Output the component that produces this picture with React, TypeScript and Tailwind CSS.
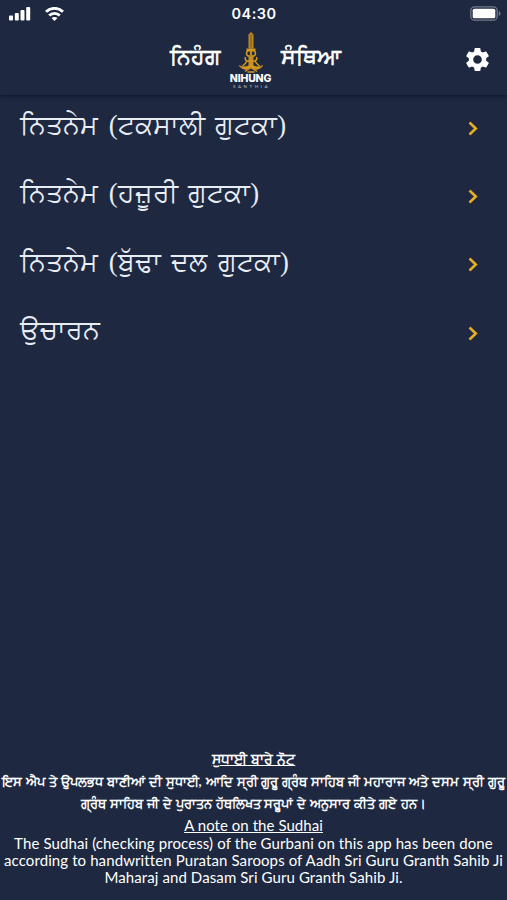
import { MdSettings } from "react-icons/md";

const items = [
  "ਨਿਤਨੇਮ (ਟਕਸਾਲੀ ਗੁਟਕਾ)",
  "ਨਿਤਨੇਮ (ਹਜ਼ੂਰੀ ਗੁਟਕਾ)",
  "ਨਿਤਨੇਮ (ਬੁੱਢਾ ਦਲ ਗੁਟਕਾ)",
  "ਉਚਾਰਨ",
];

function StatusBar() {
  return (
    <div className="grid h-[27px] grid-cols-3 items-center pr-[6px] pl-[9px]">
      <div className="flex items-center gap-[14px]">
        <svg width="22" height="14" viewBox="0 0 22 14" fill="#fff">
          <rect x="0" y="8.5" width="4" height="5" rx="1" />
          <rect x="5.8" y="6" width="4" height="7.5" rx="1" />
          <rect x="11.5" y="3" width="4" height="10.5" rx="1" />
          <rect x="17.2" y="0" width="4" height="13.5" rx="1" />
        </svg>
        <svg width="19" height="14" viewBox="0 0 19 14" fill="none" stroke="#fff" strokeWidth="2.9">
          <path d="M1 4.800a12.200 12.200 0 0 1 17 0" />
          <path d="M4.200 8.500a7.600 7.600 0 0 1 10.600 0" />
          <path d="M9.500 14 6.500 11q3-2.200 6 0Z" fill="#fff" stroke="none" />
        </svg>
      </div>
      <span className="-ml-[2px] text-center font-['Inter','sans-serif'] text-[14.5px] font-semibold tracking-[0.5px]">04:30</span>
      <svg className="justify-self-end" width="31" height="15" viewBox="0 0 31 15">
        <rect x=".8" y=".8" width="26.4" height="13.4" rx="3.8" fill="none" stroke="#737a8b" strokeWidth="1.3" />
        <rect x="2.7" y="2.7" width="22.6" height="9.6" rx="1.6" fill="#fff" />
        <path d="M28.8 5v5q1.8-.8 1.8-2.5T28.8 5" fill="#737a8b" />
      </svg>
    </div>
  );
}

function Logo() {
  return (
    <div className="flex w-[42px] flex-col items-center">
      <svg width="26" height="41" viewBox="0 0 26 41" fill="none" stroke="#d5981f">
        <path d="M13 .5l2 2V16h-4V2.500Z" fill="#a97a20" strokeWidth=".9" />
        <path d="M13 3v13" stroke="#745c24" strokeWidth=".8" />
        <path d="M8.500 16.500h9v3h-9z" fill="#d5981f" stroke="none" />
        <path d="M10 18.500q-3 3 0 5.500h6q3-2.500 0-5.500" strokeWidth="1.600" />
        <path d="M13 17v6" strokeWidth="1.800" />
        <path d="M10.500 23.500h5v11h-5z" fill="#c68d20" stroke="none" />
        <path d="M7.500 25q-1 3 1.500 4h8q2.500-1 1.500-4M9 29q-1.500 3-4.500 5M17 29q1.500 3 4.500 5" strokeWidth="1.500" />
        <path d="M1 33.500q6.500 2.800 12-1 5.500 3.800 12 1-3 4-7 4l-5-2-5 2q-4 0-7-4Z" fill="#d5981f" strokeWidth=".5" />
        <path d="m7 39.500 6-4 6 4M9.500 40h7" strokeWidth="1.400" />
      </svg>
      <span className="mt-[1px] font-['Inter','sans-serif'] text-[10.5px] leading-[9px] font-extrabold tracking-[-0.2px]">NIHUNG</span>
      <span className="mt-[1.5px] pl-[2px] text-[4.5px] leading-[4px] font-semibold tracking-[2.5px] text-[#a1a7b4]">SANTHIA</span>
    </div>
  );
}

function Header() {
  return (
    <header className="h-[95px] shrink-0 shadow-[0_1px_4px_rgba(7,18,33,0.75)]">
      <StatusBar />
      <div className="grid h-[68px] grid-cols-[170px_1fr_166px] items-start">
        <span />
        <div className="flex items-start justify-between pt-[5px]">
          <span className="pt-[8px] text-[22px] leading-8 whitespace-nowrap [-webkit-text-stroke:0.7px_white]">ਨਿਹੰਗ</span>
          <Logo />
          <span className="pt-[8px] text-[22px] leading-8 whitespace-nowrap [-webkit-text-stroke:0.7px_white]">ਸੰਥਿਆ</span>
        </div>
        <button className="mt-[18px] mr-[15px] justify-self-end" aria-label="Settings">
          <MdSettings size={29} />
        </button>
      </div>
    </header>
  );
}

export default function App() {
  return (
    <div className="flex h-[900px] w-[507px] flex-col overflow-hidden bg-[#1e2840] font-['Lato','sans-serif'] text-white">
      <Header />
      <main className="-mt-px flex flex-1 flex-col">
        {items.map((item) => (
          <button key={item} className="flex h-[68.3px] items-center justify-between pr-[28px] pl-5 text-left text-[#e8edf4]">
            <span className="pb-[6px] font-['Liberation_Serif','serif'] text-[26.7px] leading-[34px] [word-spacing:4px] whitespace-nowrap">{item}</span>
            <svg width="11" height="15" viewBox="0 0 11 15" fill="none" stroke="#e6ad27" strokeWidth="2.6">
              <path d="m1.500 1.500 6.300 6-6.300 6" />
            </svg>
          </button>
        ))}
      </main>
      <footer className="flex h-[152px] shrink-0 flex-col items-center whitespace-nowrap">
        <p className="text-[13.5px] leading-[22px] font-bold [word-spacing:1px] underline">ਸੁਧਾਈ ਬਾਰੇ ਨੋਟ</p>
        <p className="text-[13px] leading-[22px] font-bold [word-spacing:0.8px]">ਇਸ ਐਪ ਤੇ ਉਪਲਭਧ ਬਾਣੀਆਂ ਦੀ ਸੁਧਾਈ, ਆਦਿ ਸ੍ਰੀ ਗੁਰੂ ਗ੍ਰੰਥ ਸਾਹਿਬ ਜੀ ਮਹਾਰਾਜ ਅਤੇ ਦਸਮ ਸ੍ਰੀ ਗੁਰੂ</p>
        <p className="text-[13px] leading-[22px] font-bold [word-spacing:0.8px]">ਗ੍ਰੰਥ ਸਾਹਿਬ ਜੀ ਦੇ ਪੁਰਾਤਨ ਹੱਥਲਿਖਤ ਸਰੂਪਾਂ ਦੇ ਅਨੁਸਾਰ ਕੀਤੇ ਗਏ ਹਨ।</p>
        <p className="pt-px text-[15px] leading-[20px] tracking-[0.05px] underline">A note on the Sudhai</p>
        <p className="text-[15px] leading-[17px] tracking-[0.11px]">The Sudhai (checking process) of the Gurbani on this app has been done</p>
        <p className="text-[15px] leading-[17px] tracking-[0.1px]">according to handwritten Puratan Saroops of Aadh Sri Guru Granth Sahib Ji</p>
        <p className="text-[15px] leading-[17px] tracking-[0.1px]">Maharaj and Dasam Sri Guru Granth Sahib Ji.</p>
      </footer>
    </div>
  );
}
